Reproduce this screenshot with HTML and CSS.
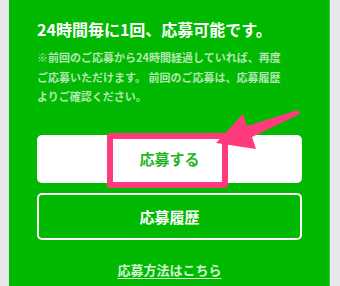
FILE: index.html
```html
<!DOCTYPE html>
<html lang="ja">
<head>
<meta charset="utf-8">
<link rel="stylesheet" href="styles.css">
</head>
<body>
<div class="panel">
  <h1 class="title">24時間毎に1回、応募可能です。</h1>
  <p class="note">※前回のご応募から24時間経過していれば、再度<br>ご応募いただけます。 前回のご応募は、応募履歴<br>よりご確認ください。</p>
  <div class="buttons">
    <a class="btn btn-primary">応募する</a>
    <a class="btn btn-outline">応募履歴</a>
  </div>
  <a class="howto">応募方法はこちら</a>
  <div class="highlight"></div>
  <svg class="arrow" width="340" height="286" viewBox="0 0 340 286">
    <polygon points="216,143 243,114 247,126 298,110 300,114 252,137 256,149" fill="#ff3b7e"/>
  </svg>
</div>
</body>
</html>
```
FILE: styles.css
```css
html, body {
  margin: 0;
  padding: 0;
}
body {
  background: #e8e8ec;
  width: 340px;
  height: 286px;
  overflow: hidden;
  font-family: "Noto Sans CJK JP", "Noto Sans", sans-serif;
}
.panel {
  margin-left: 9px;
  width: 321px;
  height: 286px;
  box-sizing: border-box;
  background: #00b900;
  border-right: 1px solid #3ccb3c;
  padding: 18px 27px 0 28px;
  position: relative;
}
.title {
  margin: 0;
  font-size: 16px;
  line-height: 22px;
  font-weight: 700;
  color: #ffffff;
}
.note {
  margin: 8px 0 0;
  font-size: 11px;
  line-height: 19.5px;
  font-weight: 700;
  color: #b4e8b4;
  white-space: nowrap;
}
.buttons {
  margin-top: 28px;
  display: flex;
  flex-direction: column;
  gap: 10px;
}
.btn {
  display: flex;
  align-items: center;
  justify-content: center;
  height: 48px;
  box-sizing: border-box;
  border-radius: 5px;
  font-size: 15px;
  font-weight: 700;
}
.btn-primary {
  background: #ffffff;
  color: #1fb51f;
}
.btn-outline {
  height: 47px;
  border: 2px solid #ffffff;
  color: #ffffff;
}
.howto {
  display: block;
  margin-top: 21px;
  text-align: center;
  font-size: 13px;
  line-height: 18px;
  font-weight: 700;
  color: #d2f2d2;
  text-decoration: underline;
  text-underline-offset: 3px;
}
.highlight {
  position: absolute;
  left: 98px;
  top: 133px;
  width: 121px;
  height: 55px;
  box-sizing: border-box;
  border: 6px solid #ff3b7e;
  border-radius: 3px;
}
.arrow {
  position: absolute;
  left: -9px;
  top: 0;
}
```
